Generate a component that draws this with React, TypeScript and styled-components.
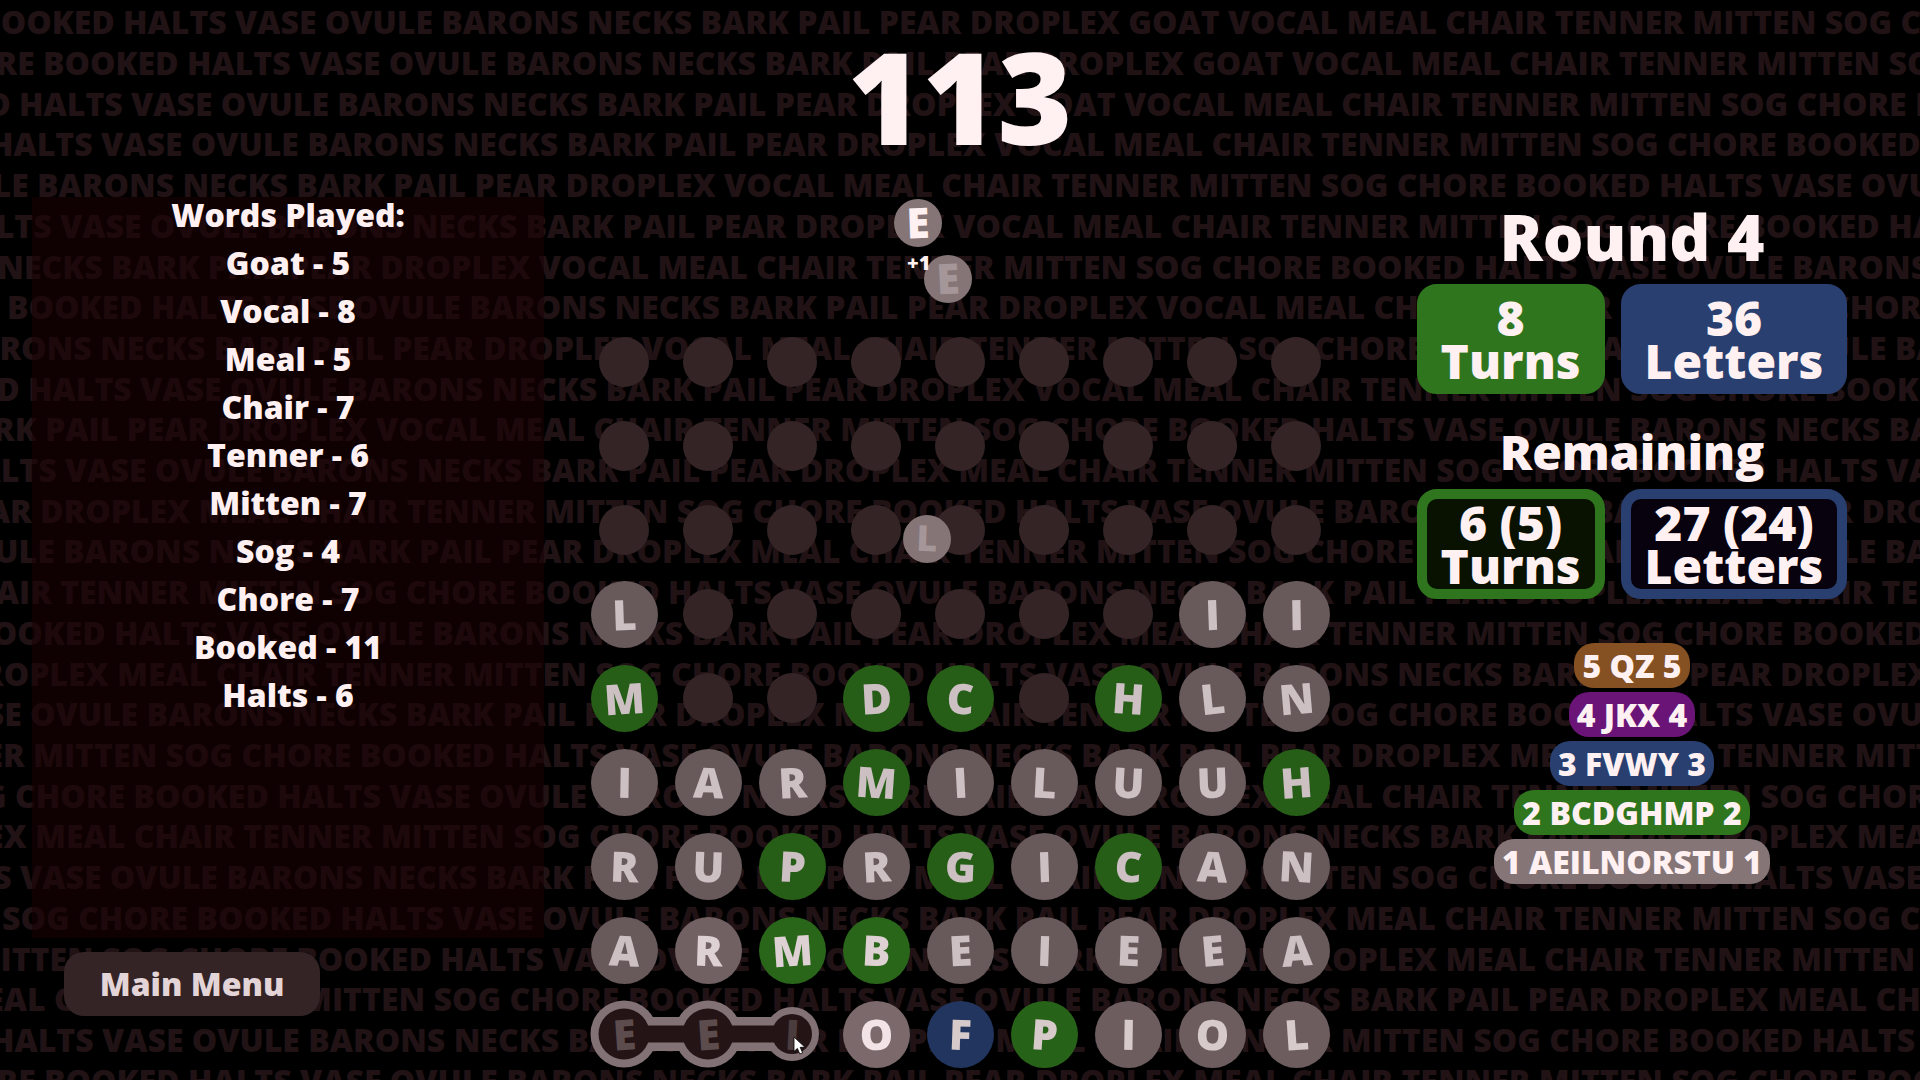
import React from "react";
import styled, { createGlobalStyle } from "styled-components";

const GlobalStyle = createGlobalStyle`
  * { box-sizing: border-box; }
  body {
    margin: 0;
    background: #000;
    color: #fff0f2;
    font-family: "Open Sans", "Noto Sans", sans-serif;
    font-weight: 800;
    overflow: hidden;
  }
  button { font: inherit; color: inherit; border: 0; cursor: default; }
  h1, h2, p, ul { margin: 0; padding: 0; font-size: inherit; font-weight: inherit; }
  ul { list-style: none; }
`;

const palette = {
  grey: "#857577",
  green: "#2f751e",
  blue: "#283f70",
  purple: "#6a1478",
  orange: "#855022",
  slot: "#342425",
};
type Tone = "grey" | "green" | "blue" | "purple" | "orange";

const tileTones = { ...palette, grey: "#826f71" };

/* ---------- scrolling word backdrop ---------- */

const CYCLE =
  "BOOKED HALTS VASE OVULE BARONS NECKS BARK PAIL PEAR DROPLEX GOAT VOCAL MEAL CHAIR TENNER MITTEN SOG CHORE".split(" ");

interface BackdropLine {
  lead: string;
  scroll: number;
  skip: string[];
}

const none: string[] = [];
const goat = ["GOAT"];
const both = ["GOAT", "VOCAL"];

const backdropLines: BackdropLine[] = [
  { lead: "BOOKED", scroll: 123, skip: none },
  { lead: "CHORE", scroll: 43, skip: none },
  { lead: "BOOKED", scroll: 19, skip: none },
  { lead: "HALTS", scroll: 101, skip: goat },
  { lead: "OVULE", scroll: 37, skip: goat },
  { lead: "HALTS", scroll: 60, skip: goat },
  { lead: "NECKS", scroll: 111, skip: goat },
  { lead: "CHORE", scroll: 7, skip: goat },
  { lead: "BARONS", scroll: 100, skip: goat },
  { lead: "BOOKED", scroll: 28, skip: goat },
  { lead: "BARK", scroll: 45, skip: goat },
  { lead: "HALTS", scroll: 65, skip: both },
  { lead: "PEAR", scroll: 40, skip: both },
  { lead: "OVULE", scroll: 63, skip: both },
  { lead: "CHAIR", scroll: 60, skip: both },
  { lead: "BOOKED", scroll: 114, skip: both },
  { lead: "DROPLEX", scroll: 117, skip: both },
  { lead: "VASE", scroll: 30, skip: both },
  { lead: "TENNER", scroll: 33, skip: both },
  { lead: "SOG", scroll: 15, skip: both },
  { lead: "DROPLEX", scroll: 35, skip: both },
  { lead: "HALTS", scroll: 20, skip: both },
  { lead: "SOG", scroll: 78, skip: both },
  { lead: "MITTEN", scroll: 102, skip: both },
  { lead: "MEAL", scroll: 54, skip: both },
  { lead: "HALTS", scroll: 102, skip: both },
  { lead: "CHORE", scroll: 44, skip: both },
];

const wordsAfter = ({ lead, skip }: BackdropLine) => {
  const words = CYCLE.filter((w) => !skip.includes(w));
  const start = words.indexOf(lead) + 1;
  const loop = [...words.slice(start), ...words.slice(0, start)];
  return [...loop, ...loop.slice(0, 4)].join(" ");
};

const Backdrop = styled.div`
  position: absolute;
  inset: 2px 0 -21px;
  z-index: -1;
  display: grid;
  grid-template-rows: repeat(27, 1fr);
  overflow: hidden;
  color: #211315;
  font-size: 32px;
  white-space: pre;
`;

const BackdropRow = styled.div`
  display: flex;
  align-items: center;
  min-width: 0;
  min-height: 0;
  line-height: 40px;
  overflow: hidden;
`;

const Lead = styled.span<{ $width: number }>`
  display: flex;
  justify-content: flex-end;
  flex: 0 0 ${(p) => p.$width}px;
  min-width: 0;
`;

/* ---------- page frame ---------- */

const Page = styled.div`
  position: relative;
  z-index: 0;
  display: flex;
  flex-direction: column;
  min-height: 100vh;
  overflow: hidden;
`;

const Score = styled.h1`
  height: 197px;
  font-size: 128px;
  line-height: 192px;
  text-align: center;
`;

const Main = styled.main`
  flex: 1;
  display: grid;
  grid-template-columns: minmax(0, 1fr) auto minmax(0, 1fr);
`;

/* ---------- words played ---------- */

const WordsColumn = styled.section`
  display: flex;
  flex-direction: column;
  gap: 14px;
  padding: 0 38px 64px 32px;
`;

const WordsPanel = styled.div`
  flex: 1;
  background: rgba(28, 2, 3, 0.55);
  font-size: 32px;
  line-height: 48px;
  text-align: center;
`;

const WordsBody = styled.div`
  margin-top: -6px;
`;

const MenuButton = styled.button`
  width: 256px;
  height: 64px;
  margin-left: 32px;
  border-radius: 20px;
  background: ${palette.slot};
  color: #e3d5d7;
  font-size: 32px;
  line-height: 44px;
`;

/* ---------- board ---------- */

const BoardColumn = styled.section`
  padding-top: 123px;
`;

const Board = styled.div`
  position: relative;
  display: grid;
  grid-template-columns: repeat(9, 84px);
  grid-auto-rows: 84px;
  place-items: center;
`;

const Slot = styled.span`
  width: 50px;
  height: 50px;
  border-radius: 50%;
  background: ${palette.slot};
`;

const Tile = styled.button<{ $tone: Tone; $light: number }>`
  width: 67px;
  height: 67px;
  padding: 0;
  border-radius: 50%;
  background: ${(p) => tileTones[p.$tone]};
  filter: brightness(${(p) => p.$light});
  font-size: 42px;
  line-height: 64px;
`;

const PickedTile = styled.button<{ $fresh?: boolean }>`
  position: relative;
  z-index: 1;
  width: 67px;
  height: 67px;
  padding: 0;
  border-radius: 50%;
  background: transparent;
  color: ${(p) => (p.$fresh ? "#4b3c3e" : "#5c4c4e")};
  font-size: 42px;
  line-height: 64px;
`;

const Glyph = styled.span<{ $tilt: number }>`
  display: block;
  transform: rotate(${(p) => p.$tilt}deg);
`;

const Chain = styled.svg`
  position: absolute;
  left: 0;
  bottom: 0;
  width: 252px;
  height: 84px;
`;

const Pointer = styled.svg`
  position: absolute;
  z-index: 2;
  left: 211px;
  bottom: 20px;
  width: 14px;
  height: 20px;
`;

const Flying = styled.span<{ $x: number; $y: number; $faded?: boolean; $small?: boolean }>`
  position: absolute;
  left: ${(p) => p.$x}px;
  top: ${(p) => p.$y}px;
  width: 48px;
  height: 48px;
  border-radius: 50%;
  background: ${palette.grey};
  color: ${(p) => (p.$faded ? "#a59799" : "#fff0f2")};
  font-size: ${(p) => (p.$small ? 36 : 42)}px;
  line-height: 46px;
  text-align: center;
`;

const Bonus = styled.span`
  position: absolute;
  z-index: 1;
  left: 325px;
  top: -69px;
  font-size: 20px;
  line-height: 24px;
`;

/* ---------- round status ---------- */

const StatusColumn = styled.aside`
  display: flex;
  flex-direction: column;
  align-items: center;
  padding: 0 72px 0 78px;
`;

const RoundTitle = styled.h2`
  height: 87px;
  font-size: 64px;
  line-height: 80px;
`;

const RemainingTitle = styled.h2`
  height: 95px;
  padding-top: 28px;
  font-size: 48px;
  line-height: 60px;
`;

const Counters = styled.div`
  display: flex;
  gap: 16px;
`;

const Counter = styled.div<{ $tone: Tone; $fill: string }>`
  height: 110px;
  padding: 2px 14px 0;
  border: 10px solid ${(p) => palette[p.$tone]};
  border-radius: 20px;
  background: ${(p) => p.$fill};
  font-size: 48px;
  line-height: 43px;
  text-align: center;
`;

const Legend = styled.ul`
  display: flex;
  flex-direction: column;
  align-items: center;
  gap: 4px;
  margin-top: 44px;
`;

const LegendItem = styled.li<{ $tone: Tone }>`
  padding: 0 8px;
  border-radius: 20px;
  background: ${(p) => palette[p.$tone]};
  font-size: 32px;
  line-height: 45px;
`;

/* ---------- data ---------- */

const played: [string, number][] = [
  ["Goat", 5], ["Vocal", 8], ["Meal", 5], ["Chair", 7], ["Tenner", 6],
  ["Mitten", 7], ["Sog", 4], ["Chore", 7], ["Booked", 11], ["Halts", 6],
];

const boardRows = [
  ".........",
  ".........",
  ".........",
  "L......II",
  "M..DC.HLN",
  "IARMILUUH",
  "RUPRGICAN",
  "ARMBEIEEA",
  "EEIOFPIOL",
];

const tilts = [
  [], [], [],
  [-2, 0, 0, 0, 0, 0, 0, -2, -1],
  [-4, 0, 0, -3, 2, 0, 4, -6, -5],
  [1, 2, -3, 4, -3, 3, 3, -2, -4],
  [2, 2, 3, -3, 2, -2, 3, 3, 3],
  [3, 2, -4, 3, -3, 2, 2, -5, -4],
  [-4, -4, 3, -2, 2, 4, 1, 2, -4],
];

const legend: [Tone, string][] = [
  ["orange", "5 QZ 5"],
  ["purple", "4 JKX 4"],
  ["blue", "3 FVWY 3"],
  ["green", "2 BCDGHMP 2"],
  ["grey", "1 AEILNORSTU 1"],
];

const toneOf = (letter: string): Tone =>
  "FVWY".includes(letter) ? "blue" : "BCDGHMP".includes(letter) ? "green" : "grey";

const lightOf = (row: number, col: number) => {
  if (row === 8 && col === 3) return 0.95;
  if (row === 7 && col > 0 && col < 4) return 0.87;
  return row === 8 ? 0.84 : 0.8;
};

const ChainShape = ({ color, r, last, bar }: { color: string; r: number; last: number; bar: number }) => (
  <g fill={color} stroke={color} strokeWidth={0}>
    <circle cx="42" cy="42" r={r} />
    <circle cx="126" cy="42" r={r} />
    <circle cx="210" cy="42" r={last} />
    <path d="M42 42H210" strokeWidth={bar} />
  </g>
);

export default function App() {
  return (
    <Page>
      <GlobalStyle />
      <Backdrop aria-hidden="true">
        {backdropLines.map((line, i) => (
          <BackdropRow key={i}>
            <Lead $width={line.scroll}>{line.lead + " "}</Lead>
            <span>{wordsAfter(line)}</span>
          </BackdropRow>
        ))}
      </Backdrop>
      <Score>113</Score>
      <Main>
        <WordsColumn>
          <WordsPanel>
            <WordsBody>
              <h2>Words Played:</h2>
              <ul>
                {played.map(([word, points]) => (
                  <li key={word}>{word} - {points}</li>
                ))}
              </ul>
            </WordsBody>
          </WordsPanel>
          <MenuButton type="button">Main Menu</MenuButton>
        </WordsColumn>

        <BoardColumn>
          <Board>
            {boardRows.flatMap((row, r) =>
              row.split("").map((letter, c) => {
                const key = `${r}-${c}`;
                if (letter === ".") return <Slot key={key} />;
                const glyph = <Glyph $tilt={tilts[r][c]}>{letter}</Glyph>;
                if (r === 8 && c < 3)
                  return <PickedTile key={key} type="button" $fresh={c === 2}>{glyph}</PickedTile>;
                return (
                  <Tile key={key} type="button" $tone={toneOf(letter)} $light={lightOf(r, c)}>
                    {glyph}
                  </Tile>
                );
              })
            )}
            <Chain viewBox="0 0 252 84" aria-hidden="true">
              <ChainShape color="#827275" r={33.5} last={27} bar={34} />
              <ChainShape color="#241415" r={25.5} last={20} bar={17} />
            </Chain>
            <Flying $x={312} $y={-121}><Glyph $tilt={-2}>E</Glyph></Flying>
            <Flying $x={342} $y={-65} $faded><Glyph $tilt={-3}>E</Glyph></Flying>
            <Flying $x={321} $y={195} $faded $small><Glyph $tilt={2}>L</Glyph></Flying>
            <Bonus>+1</Bonus>
            <Pointer viewBox="0 0 14 20" aria-hidden="true">
              <path
                d="M1 1V15.5L4.4 12.4L6.8 18L9.6 16.8L7.2 11.3H12Z"
                fill="#fff"
                stroke="#000"
                strokeWidth="0.8"
              />
            </Pointer>
          </Board>
        </BoardColumn>

        <StatusColumn>
          <RoundTitle>Round 4</RoundTitle>
          <Counters>
            <Counter $tone="green" $fill={palette.green}><p>8</p><p>Turns</p></Counter>
            <Counter $tone="blue" $fill={palette.blue}><p>36</p><p>Letters</p></Counter>
          </Counters>
          <RemainingTitle>Remaining</RemainingTitle>
          <Counters>
            <Counter $tone="green" $fill="#091200"><p>6 (5)</p><p>Turns</p></Counter>
            <Counter $tone="blue" $fill="#08020f"><p>27 (24)</p><p>Letters</p></Counter>
          </Counters>
          <Legend>
            {legend.map(([tone, text]) => (
              <LegendItem key={tone} $tone={tone}>{text}</LegendItem>
            ))}
          </Legend>
        </StatusColumn>
      </Main>
    </Page>
  );
}
